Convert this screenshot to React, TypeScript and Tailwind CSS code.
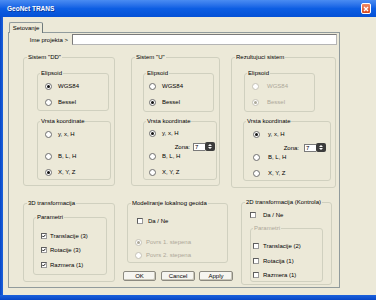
import React from 'react';

type OptProps = {
	label: string;
	checked?: boolean;
	disabled?: boolean;
	className?: string;
	gap?: string;
};

const Radio: React.FC<OptProps> = ({ label, checked = false, disabled = false, className = '', gap = 'ml-[6px]' }) => (
	<div className={`flex items-center h-[8px] ${className}`}>
		<span className={`w-[7px] h-[7px] flex-none rounded-full border bg-white flex items-center justify-center ${disabled ? 'border-[#C4C2B6]' : 'border-[#6E6E6E]'}`}>
			{checked && <span className={`w-[3px] h-[3px] rounded-full ${disabled ? 'bg-[#ACA899]' : 'bg-[#111]'}`} />}
		</span>
		<span className={`${gap} whitespace-nowrap ${disabled ? 'text-[#ACA899]' : 'text-black'}`}>{label}</span>
	</div>
);

const Check: React.FC<OptProps> = ({ label, checked = false, disabled = false, className = '', gap = 'ml-[3px]' }) => (
	<div className={`flex items-center h-[8px] ${className}`}>
		<span className="w-[6px] h-[6px] flex-none border border-[#5E5E5E] border-r-[#9A9A9A] border-b-[#9A9A9A] bg-white flex items-center justify-center">
			{checked && (
				<svg width="4" height="4" viewBox="0 0 4 4">
					<path d="M0.3 1.8 L1.4 3 L3.7 0.6" stroke="#111" strokeWidth="1" fill="none" />
				</svg>
			)}
		</span>
		<span className={`${gap} whitespace-nowrap ${disabled ? 'text-[#ACA899]' : 'text-black'}`}>{label}</span>
	</div>
);

const Group: React.FC<{ title: string; className: string; inner?: boolean; muted?: boolean; children?: React.ReactNode }> = ({ title, className, inner = false, muted = false, children }) => (
	<fieldset className={`flex flex-col flex-none border border-[#D0D0BF] rounded-[3px] ${className}`}>
		<legend className={`${inner ? 'ml-[2px]' : 'ml-[3px]'} px-[1px] leading-[8px] whitespace-nowrap ${muted ? 'text-[#ACA899]' : 'text-black'}`}>
			{title}
		</legend>
		{children}
	</fieldset>
);

const Spin: React.FC = () => (
	<div className="flex items-center">
		<div className="w-[12px] h-[8px] border border-[#7A7A7A] border-r-0 bg-white pl-[1px] leading-[7px]">7</div>
		<div className="w-[10px] h-[9px] rounded-[2px] bg-[#3C3C3C] flex flex-col items-center justify-center gap-[1px]">
			<span className="w-0 h-0 border-x-[2px] border-x-transparent border-b-[2px] border-b-white" />
			<span className="w-0 h-0 border-x-[2px] border-x-transparent border-t-[2px] border-t-white" />
		</div>
	</div>
);

const Btn: React.FC<{ label: string; w: string }> = ({ label, w }) => (
	<button className={`${w} h-[10px] flex items-center justify-center border border-[#8C8A80] rounded-[2px] bg-[#F6F5F0] shadow-[inset_-1px_-1px_0_#C9C6B8] leading-none text-black`}>
		{label}
	</button>
);

export default function App() {
	return (
		<div className="w-[376px] h-[300px] bg-[#ECE9D8] flex flex-col overflow-hidden font-['Liberation_Sans',Arial,sans-serif] text-[6px] leading-[8px] text-black">
			{/* title bar */}
			<div className="h-[17px] flex-none flex items-center pl-[7px] pr-[5px] bg-linear-to-b from-[#4A8CF2] via-[#0D5EE3] to-[#0551D6]">
				<span className="text-white font-bold text-[6.5px] [text-shadow:1px_1px_0_#0B3A9E]">GeoNet TRANS</span>
				<div className="ml-auto w-[10px] h-[11px] rounded-[2px] border border-white bg-linear-to-b from-[#EE8A64] to-[#D7471E] flex items-center justify-center">
					<svg width="6" height="6" viewBox="0 0 6 6">
						<path d="M1 1 L5 5 M5 1 L1 5" stroke="white" strokeWidth="1.4" />
					</svg>
				</div>
			</div>

			<div className="flex flex-1 min-h-0">
				<div className="w-[3px] bg-linear-to-r from-[#0846C6] to-[#1C62DC]" />
				<div className="flex-1 flex flex-col">
					{/* tab */}
					<div className="pt-[5px] pl-[6px] flex">
						<div className="relative z-10 -mb-[1px] w-[34px] h-[11px] border border-b-0 border-[#919B9C] border-r-[#6F7A7B] rounded-t-[2px] bg-[#ECE9D8] flex items-center justify-center">
							Setovanje
						</div>
					</div>

					{/* tab page */}
					<div className="ml-[5px] w-[332px] h-[256px] border border-[#919B9C] flex flex-col">
						<div className="mt-[1px] h-[11px] flex items-center">
							<span className="ml-[19px] w-[40px] text-right whitespace-nowrap">Ime projekta &gt;</span>
							<div className="ml-[4px] w-[265px] h-[11px] bg-white border border-[#B5B5B5] border-t-[#7A7A7A] border-l-[#7A7A7A]" />
						</div>

						{/* systems */}
						<div className="mt-[8px] h-[135px] flex items-start">
							<Group title={'Sistem "DD"'} className="ml-[14px] w-[92px] h-[133px]">
								<Group title="Elipsoid" inner className="mt-[8px] ml-[13px] w-[72px] h-[42px]">
									<Radio label="WGS84" checked className="mt-[5px] ml-[7px]" />
									<Radio label="Bessel" className="mt-[8px] ml-[7px]" />
								</Group>
								<Group title="Vrsta koordinate" inner className="mt-[6px] ml-[13px] w-[74px] h-[63px]">
									<Radio label="y, x, H" className="mt-[5px] ml-[7px]" />
									<Radio label="B, L, H" className="mt-[14px] ml-[7px]" />
									<Radio label="X, Y, Z" checked className="mt-[8px] ml-[7px]" />
								</Group>
							</Group>

							<Group title={'Sistem "U"'} className="ml-[16px] w-[89px] h-[133px]">
								<Group title="Elipsoid" inner className="mt-[8px] ml-[11px] w-[71px] h-[43px]">
									<Radio label="WGS84" className="mt-[5px] ml-[5px]" />
									<Radio label="Bessel" checked className="mt-[8px] ml-[5px]" />
								</Group>
								<Group title="Vrsta koordinate" inner className="mt-[5px] ml-[11px] w-[74px] h-[63px]">
									<Radio label="y, x, H" checked className="mt-[4px] ml-[5px]" />
									<div className="mt-[5px] h-[9px] flex items-center justify-end pr-[1px]">
										<span className="mr-[3px]">Zona:</span>
										<Spin />
									</div>
									<Radio label="B, L, H" className="mt-[1px] ml-[5px]" />
									<Radio label="X, Y, Z" className="mt-[8px] ml-[5px]" />
								</Group>
							</Group>

							<Group title="Rezultujuci sistem" className="ml-[11px] w-[105px] h-[135px]">
								<Group title="Elipsoid" inner className="mt-[8px] ml-[12px] w-[71px] h-[43px]">
									<Radio label="WGS84" disabled gap="ml-[8px]" className="mt-[5px] ml-[7px]" />
									<Radio label="Bessel" checked disabled gap="ml-[8px]" className="mt-[8px] ml-[7px]" />
								</Group>
								<Group title="Vrsta koordinate" inner className="mt-[5px] ml-[11px] w-[88px] h-[64px]">
									<Radio label="y, x, H" checked gap="ml-[8px]" className="mt-[5px] ml-[9px]" />
									<div className="mt-[5px] h-[9px] flex items-center justify-end pr-[4px]">
										<span className="mr-[5px]">Zona:</span>
										<Spin />
									</div>
									<Radio label="B, L, H" gap="ml-[8px]" className="mt-[1px] ml-[9px]" />
									<Radio label="X, Y, Z" gap="ml-[8px]" className="mt-[8px] ml-[9px]" />
								</Group>
							</Group>
						</div>

						{/* transformations */}
						<div className="mt-[10px] flex items-start">
							<Group title="3D transformacija" className="mt-[1px] ml-[14px] w-[92px] h-[83px]">
								<Group title="Parametri" inner className="mt-[6px] ml-[9px] w-[74px] h-[62px]">
									<Check label="Translacije (3)" checked className="mt-[11px] ml-[7px]" />
									<Check label="Rotacije (3)" checked className="mt-[6px] ml-[7px]" />
									<Check label="Razmera (1)" checked className="mt-[7px] ml-[7px]" />
								</Group>
							</Group>

							<div className="mt-[1px] ml-[8px] w-[110px] flex flex-col">
								<Group title="Modeliranje lokalnog geoida" className="ml-[4px] w-[101px] h-[64px]">
									<Check label="Da / Ne" gap="ml-[5px]" className="mt-[10px] ml-[9px]" />
									<Radio label="Povrs 1. stepena" checked disabled gap="ml-[4px]" className="mt-[13px] ml-[7px]" />
									<Radio label="Povrs 2. stepena" disabled gap="ml-[4px]" className="mt-[5px] ml-[7px]" />
								</Group>
								<div className="mt-[8px] flex">
									<Btn label="OK" w="w-[33px]" />
									<div className="ml-[5px]"><Btn label="Cancel" w="w-[34px]" /></div>
									<div className="ml-[4px]"><Btn label="Apply" w="w-[34px]" /></div>
								</div>
							</div>

							<Group title="2D transformacija (Kontrola)" className="ml-[8px] w-[91px] h-[87px]">
								<Check label="Da / Ne" gap="ml-[7px]" className="mt-[5px] ml-[8px]" />
								<Group title="Parametri" inner muted className="mt-[5px] ml-[8px] w-[73px] h-[58px]">
									<Check label="Translacije (2)" gap="ml-[4px]" className="mt-[10px] ml-[2px]" />
									<Check label="Rotacija (1)" gap="ml-[4px]" className="mt-[7px] ml-[2px]" />
									<Check label="Razmera (1)" gap="ml-[4px]" className="mt-[6px] ml-[2px]" />
								</Group>
							</Group>
						</div>
					</div>
				</div>
			</div>

			<div className="h-[5px] flex-none bg-linear-to-b from-[#1C62DC] to-[#0846C6]" />
		</div>
	);
}
